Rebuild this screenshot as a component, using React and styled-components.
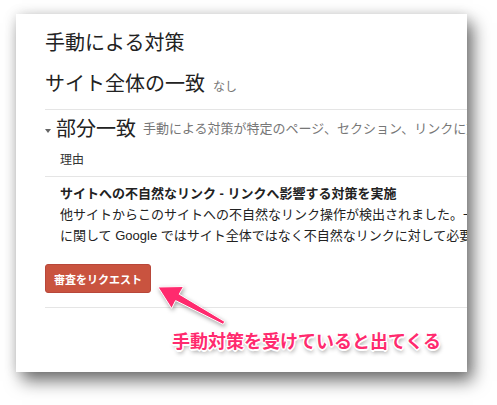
import styled, { createGlobalStyle } from "styled-components";

const GlobalStyle = createGlobalStyle`
  body {
    margin: 0;
    background: #ffffff;
    font-family: "Liberation Sans", "Noto Sans CJK JP", sans-serif;
  }
`;

const Stage = styled.div`
  position: relative;
  width: 497px;
  height: 405px;
  padding: 14px 0 0 16px;
  box-sizing: border-box;
  overflow: hidden;
`;

const Card = styled.div`
  width: 451px;
  height: 358px;
  background: #fff;
  overflow: hidden;
  padding: 16px 0 0 29px;
  box-sizing: border-box;
  box-shadow: 6px 9px 16px rgba(0, 0, 0, 0.55), 0 0 12px rgba(0, 0, 0, 0.12);
  color: #222;
  white-space: nowrap;
`;

const Title = styled.div`
  font-size: 20px;
  line-height: 26px;
  margin-top: ${(p) => p.$top || 0}px;
`;

const Note = styled.span`
  font-size: ${(p) => p.$size || 12}px;
  color: #777;
  margin-left: ${(p) => p.$gap || 8}px;
`;

const Section = styled.div`
  border-top: 1px solid #e5e5e5;
  margin-top: ${(p) => p.$top || 0}px;
`;

const Toggle = styled.div`
  display: flex;
  align-items: center;
  margin-top: 6px;
  font-size: 20px;
  line-height: 26px;
`;

const Caret = styled.span`
  width: 0;
  height: 0;
  border-left: 3px solid transparent;
  border-right: 3px solid transparent;
  border-top: 4px solid #666;
  margin: 4px 5px 0 0;
`;

const Label = styled.div`
  font-size: 12px;
  line-height: 18px;
  margin: 9px 0 7px 15px;
  color: #333;
`;

const Body = styled.div`
  padding: 6px 0 0 15px;
  font-size: 13px;
  line-height: 21px;
`;

const Strong = styled.div`
  font-weight: 700;
`;

const Button = styled.button`
  display: block;
  box-sizing: border-box;
  height: 29px;
  margin-top: 18px;
  padding: 0 8px;
  border: 1px solid #b8473a;
  border-radius: 3px;
  background: #c9533f;
  color: #fff;
  font-family: "Noto Sans CJK JP", sans-serif;
  font-size: 11px;
  font-weight: 700;
`;

const Callout = styled.div`
  position: absolute;
  left: 172px;
  top: 327px;
  font-family: "Noto Sans CJK JP", sans-serif;
  font-size: 18px;
  line-height: 26px;
  font-weight: 700;
  color: #ff2a6e;
  text-shadow: -1px -1px 0 #fff, 1px -1px 0 #fff, -1px 1px 0 #fff, 1px 1px 0 #fff,
    0 -1.5px 0 #fff, 0 1.5px 0 #fff, 1.5px 0 0 #fff, -1.5px 0 0 #fff,
    1px 3px 4px rgba(0, 0, 0, 0.45);
`;

const Arrow = styled.svg`
  position: absolute;
  left: 0;
  top: 0;
  filter: drop-shadow(1px 2px 2px rgba(0, 0, 0, 0.35));
`;

export default function App() {
  return (
    <>
      <GlobalStyle />
      <Stage>
        <Card>
          <Title>手動による対策</Title>
          <Title $top={15}>
            サイト全体の一致<Note>なし</Note>
          </Title>
          <Section $top={9}>
            <Toggle>
              <Caret />
              部分一致
              <Note $size={13} $gap={7}>
                手動による対策が特定のページ、セクション、リンクに対して適用されています。
              </Note>
            </Toggle>
            <Label>理由</Label>
            <Section>
              <Body>
                <Strong>サイトへの不自然なリンク - リンクへ影響する対策を実施</Strong>
                <div>他サイトからこのサイトへの不自然なリンク操作が検出されました。一部のリンク</div>
                <div>に関して Google ではサイト全体ではなく不自然なリンクに対して必要な対策を実施しました。</div>
              </Body>
              <Button>審査をリクエスト</Button>
              <Section $top={14} />
            </Section>
          </Section>
        </Card>
        <Arrow width="497" height="405" viewBox="0 0 497 405">
          <polygon
            points="158,287 183.5,286.5 179.2,294.2 224.8,321.6 223.2,324.4 175.6,300.6 171.6,308.5"
            fill="#ff2a6e"
            stroke="#fff"
            strokeWidth="1"
            strokeLinejoin="round"
          />
        </Arrow>
        <Callout>手動対策を受けていると出てくる</Callout>
      </Stage>
    </>
  );
}
